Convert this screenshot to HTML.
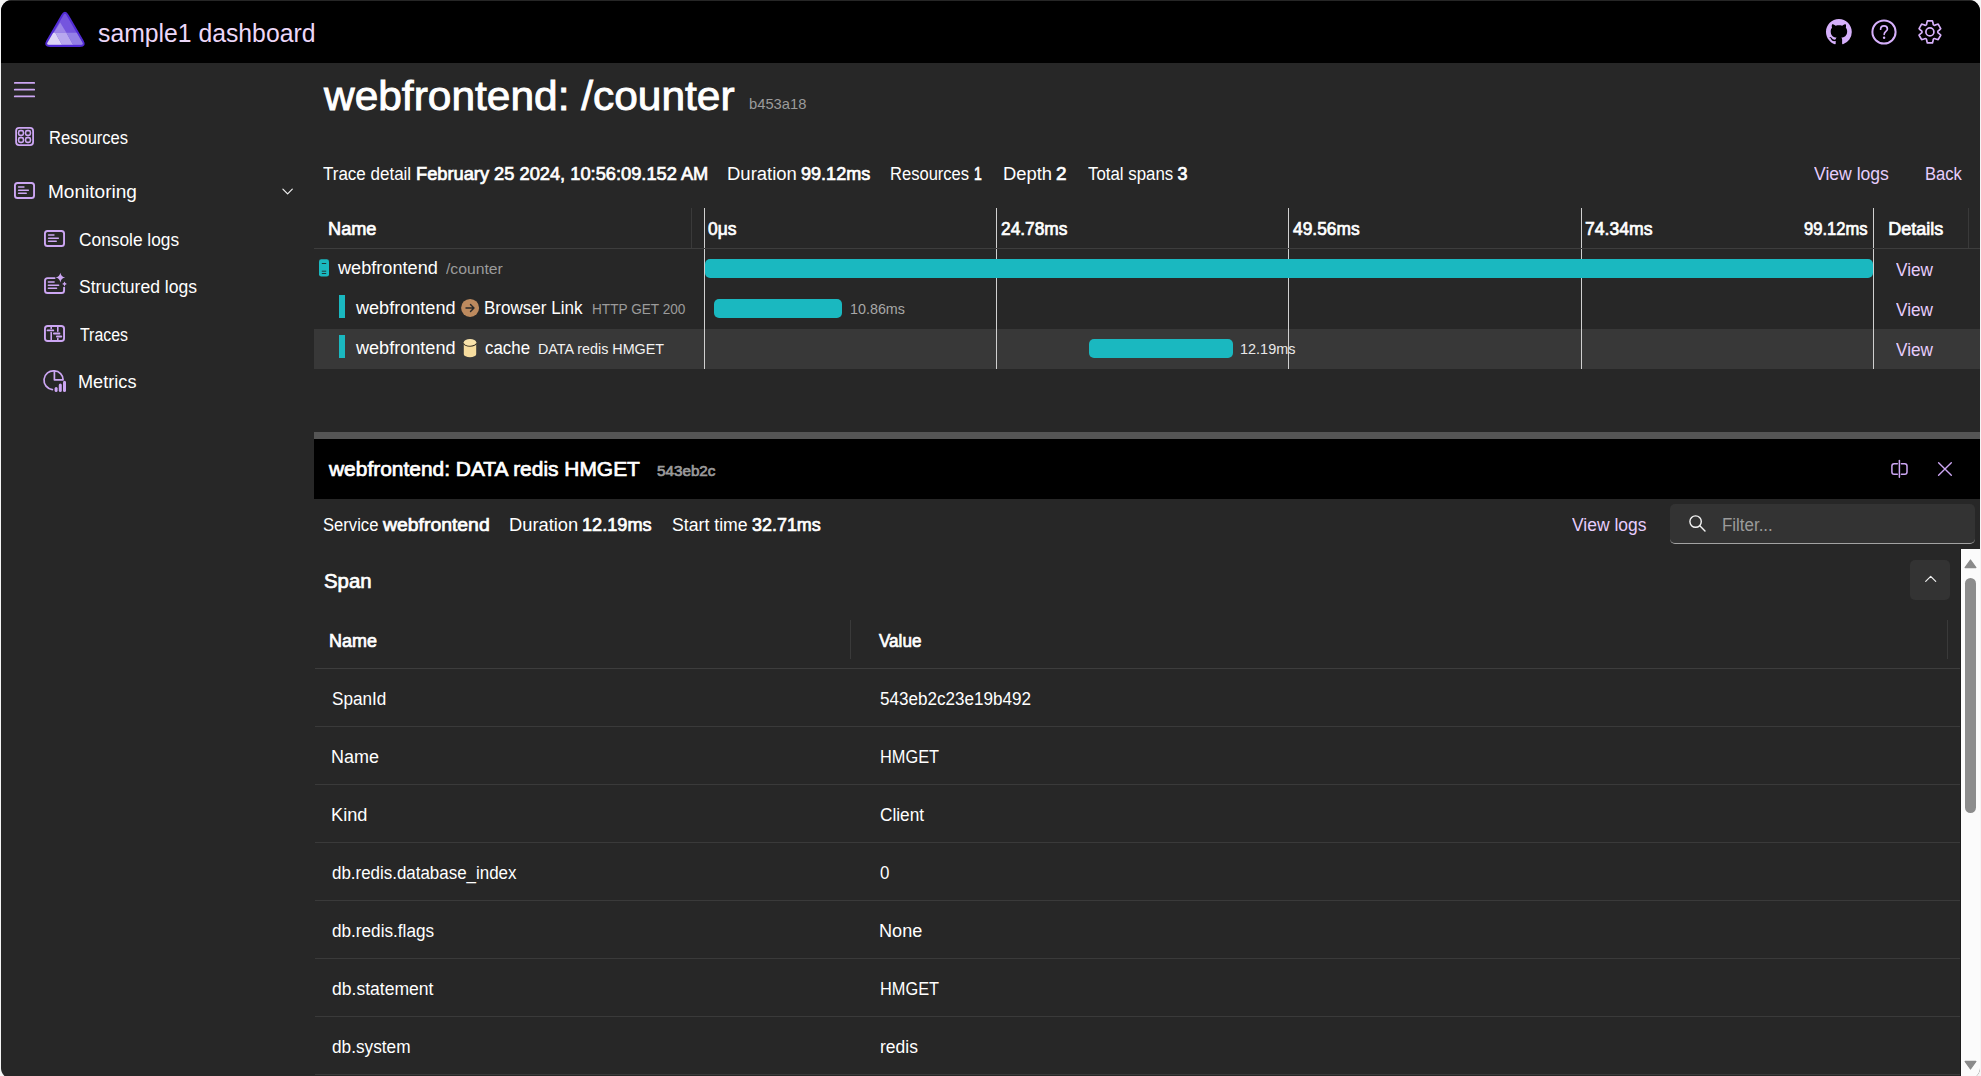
<!DOCTYPE html>
<html><head><meta charset="utf-8"><style>
html,body{margin:0;padding:0;background:#f5f5f5;width:1981px;height:1076px;overflow:hidden}
#win{position:absolute;left:1px;top:0;width:1979px;height:1079px;border-radius:11px;overflow:hidden;background:#272727}
#c{position:absolute;left:-1px;top:0;width:1981px;height:1076px}
.t{position:absolute;white-space:pre;line-height:1;font-family:"Liberation Sans",sans-serif}
svg{overflow:visible}
</style></head><body><div id="win"><div id="c">
<div style="position:absolute;left:0px;top:0px;width:1981px;height:1px;background:#262626"></div>
<div style="position:absolute;left:0px;top:1px;width:1981px;height:62px;background:#000"></div>
<svg style="position:absolute;left:40px;top:6px;" width="50" height="46" viewBox="40 6 50 46"><defs><clipPath id="lc"><path d="M66.25 14.85 Q64.95 12.60 63.65 14.85 L47.60 42.55 Q46.30 44.80 48.90 44.80 L81.00 44.80 Q83.60 44.80 82.30 42.55 Z"/></clipPath></defs>
<path d="M68.70 14.89 Q64.95 8.40 61.20 14.89 L46.35 40.61 Q42.60 47.10 50.10 47.10 L79.80 47.10 Q87.30 47.10 83.55 40.61 Z" fill="#512bd4"/>
<g clip-path="url(#lc)">
<rect x="40" y="6" width="50" height="46" fill="#7555de"/>
<path d="M60.2 22.6 L66.4 32.8 L53.7 32.8 Z" fill="#9d86e8"/>
<path d="M40 32.8 L55.3 32.8 L62.1 44.9 L40 44.9 Z" fill="#ddd4f6"/>
<path d="M55.3 32.8 L66.4 32.8 L73.2 44.9 L62.1 44.9 Z" fill="#b8a8ee"/>
<path d="M66.4 32.8 L90 32.8 L90 44.9 L73.2 44.9 Z" fill="#9480e6"/>
</g></svg>
<div class="t" style="left:98.27px;top:21px;font-size:25.5px;font-weight:400;color:#ecd7f8;transform:scaleX(0.9707);transform-origin:0 0;">sample1 dashboard</div>
<svg style="position:absolute;left:1826.4px;top:19px;" width="25.8" height="25.8" viewBox="0 0 16 16"><path fill="#d6b0fb" d="M8 0C3.58 0 0 3.58 0 8c0 3.54 2.29 6.53 5.47 7.59.4.07.55-.17.55-.38 0-.19-.01-.82-.01-1.49-2.01.37-2.53-.49-2.69-.94-.09-.23-.48-.94-.82-1.13-.28-.15-.68-.52-.01-.53.63-.01 1.08.58 1.23.82.72 1.21 1.87.87 2.33.66.07-.52.28-.87.51-1.07-1.78-.2-3.64-.89-3.64-3.95 0-.87.31-1.59.82-2.15-.08-.2-.36-1.02.08-2.12 0 0 .67-.21 2.2.82.64-.18 1.32-.27 2-.27.68 0 1.36.09 2 .27 1.53-1.04 2.2-.82 2.2-.82.44 1.1.16 1.92.08 2.12.51.56.82 1.27.82 2.15 0 3.07-1.87 3.75-3.65 3.95.29.25.54.73.54 1.48 0 1.07-.01 1.93-.01 2.2 0 .21.15.46.55.38A8.013 8.013 0 0016 8c0-4.42-3.58-8-8-8z"/></svg>
<svg style="position:absolute;left:1870px;top:18px;" width="28" height="28" viewBox="1870 18 28 28"><circle cx="1884" cy="32" r="11.6" fill="none" stroke="#d6b0fb" stroke-width="2"/>
<path d="M1880.6 29.2 C1880.6 27 1882.1 25.8 1884 25.8 C1885.9 25.8 1887.4 27 1887.4 28.9 C1887.4 31.4 1884.2 31.6 1884.2 34.3" fill="none" stroke="#d6b0fb" stroke-width="1.7" stroke-linecap="round"/>
<circle cx="1884.1" cy="37.8" r="1.2" fill="#d6b0fb"/></svg>
<svg style="position:absolute;left:1914px;top:16px;" width="32" height="32" viewBox="1914 16 32 32"><path d="M1927.36 20.89 L1932.44 20.89 L1933.08 23.16 C1933.03 25.19 1934.14 25.84 1935.88 24.78 L1938.16 24.19 L1940.71 28.60 L1939.06 30.29 C1937.27 31.26 1937.27 32.54 1939.06 33.51 L1940.71 35.20 L1938.16 39.61 L1935.88 39.02 C1934.14 37.96 1933.03 38.61 1933.08 40.64 L1932.44 42.91 L1927.36 42.91 L1926.72 40.64 C1926.77 38.61 1925.66 37.96 1923.92 39.02 L1921.64 39.61 L1919.09 35.20 L1920.74 33.51 C1922.53 32.54 1922.53 31.26 1920.74 30.29 L1919.09 28.60 L1921.64 24.19 L1923.92 24.78 C1925.66 25.84 1926.77 25.19 1926.72 23.16 Z" fill="none" stroke="#d6b0fb" stroke-width="1.7" stroke-linejoin="round"/>
<circle cx="1929.9" cy="31.9" r="4" fill="none" stroke="#d6b0fb" stroke-width="1.7"/></svg>
<svg style="position:absolute;left:10px;top:76px;" width="30" height="26" viewBox="10 76 30 26"><g stroke="#cca6f3" stroke-width="1.8" stroke-linecap="round">
<line x1="14.8" y1="82.9" x2="34.2" y2="82.9"/><line x1="14.8" y1="89.7" x2="34.2" y2="89.7"/><line x1="14.8" y1="96.4" x2="34.2" y2="96.4"/></g></svg>
<svg style="position:absolute;left:10px;top:120px;" width="30" height="30" viewBox="10 120 30 30"><g fill="none" stroke="#cca6f3" stroke-width="1.8">
<rect x="16.1" y="127.9" width="17" height="17.2" rx="3"/>
<rect x="18.6" y="130.6" width="4.8" height="4.8" rx="1.6" stroke-width="1.6"/><rect x="25.6" y="130.6" width="4.8" height="4.8" rx="1.6" stroke-width="1.6"/>
<rect x="18.6" y="137.6" width="4.8" height="4.8" rx="1.6" stroke-width="1.6"/><rect x="25.6" y="137.6" width="4.8" height="4.8" rx="1.6" stroke-width="1.6"/></g></svg>
<div class="t" style="left:48.62px;top:129px;font-size:18px;font-weight:400;color:#ffffff;transform:scaleX(0.9194);transform-origin:0 0;">Resources</div>
<svg style="position:absolute;left:10px;top:176px;" width="30" height="28" viewBox="10 176 30 28"><g fill="none" stroke="#cca6f3" stroke-width="1.9" stroke-linecap="round">
<rect x="14.95" y="182.95" width="19.1" height="15.1" rx="2.6"/>
<line x1="18.6" y1="187" x2="23.9" y2="187" stroke-width="1.6"/><line x1="18.6" y1="190.2" x2="28.3" y2="190.2" stroke-width="1.6"/><line x1="18.6" y1="193.3" x2="26.2" y2="193.3" stroke-width="1.6"/></g></svg>
<div class="t" style="left:48.41px;top:183px;font-size:18px;font-weight:400;color:#ffffff;transform:scaleX(1.0585);transform-origin:0 0;">Monitoring</div>
<svg style="position:absolute;left:278px;top:184px;" width="20" height="14" viewBox="278 184 20 14"><path d="M282.9 189.2 L287.6 193.9 L292.3 189.2" fill="none" stroke="#f0f0f0" stroke-width="1.2" stroke-linecap="round" stroke-linejoin="round"/></svg>
<svg style="position:absolute;left:40px;top:224px;" width="30" height="28" viewBox="10 176 30 28"><g fill="none" stroke="#cca6f3" stroke-width="1.9" stroke-linecap="round">
<rect x="14.95" y="182.95" width="19.1" height="15.1" rx="2.6"/>
<line x1="18.6" y1="187" x2="23.9" y2="187" stroke-width="1.6"/><line x1="18.6" y1="190.2" x2="28.3" y2="190.2" stroke-width="1.6"/><line x1="18.6" y1="193.3" x2="26.2" y2="193.3" stroke-width="1.6"/></g></svg>
<div class="t" style="left:79.04px;top:231px;font-size:18px;font-weight:400;color:#ffffff;transform:scaleX(0.9623);transform-origin:0 0;">Console logs</div>
<svg style="position:absolute;left:40px;top:266px;" width="30" height="30" viewBox="40 266 30 30"><g fill="none" stroke="#cca6f3" stroke-width="1.9" stroke-linecap="round">
<path d="M54.6 278.1 L47.6 278.1 Q45 278.1 45 280.7 L45 290.4 Q45 293 47.6 293 L61.5 293 Q64.1 293 64.1 290.4 L64.1 287.6"/>
<line x1="48.4" y1="282" x2="54.1" y2="282" stroke-width="1.6"/><line x1="48.4" y1="285.2" x2="58.6" y2="285.2" stroke-width="1.6"/><line x1="48.4" y1="288.3" x2="56.5" y2="288.3" stroke-width="1.6"/></g>
<path d="M60.35 272.8 Q61.1 276.9 65.2 277.6 Q61.1 278.3 60.35 282.4 Q59.6 278.3 55.5 277.6 Q59.6 276.9 60.35 272.8 Z" fill="#cca6f3"/>
<path d="M64.5 281.6 Q64.9 283.6 66.9 284 Q64.9 284.4 64.5 286.4 Q64.1 284.4 62.1 284 Q64.1 283.6 64.5 281.6 Z" fill="#cca6f3"/></svg>
<div class="t" style="left:79.27px;top:278px;font-size:18px;font-weight:400;color:#ffffff;transform:scaleX(0.9749);transform-origin:0 0;">Structured logs</div>
<svg style="position:absolute;left:40px;top:318px;" width="30" height="30" viewBox="40 318 30 30"><g fill="none" stroke="#cca6f3" stroke-width="1.9" stroke-linecap="round">
<rect x="44.95" y="325.95" width="19.1" height="15.1" rx="2.8"/>
<line x1="47.5" y1="330.4" x2="53.3" y2="330.4" stroke-width="1.8"/><line x1="53.9" y1="333.5" x2="59.5" y2="333.5" stroke-width="1.8"/><line x1="56.9" y1="336.5" x2="61.3" y2="336.5" stroke-width="1.8"/>
<line x1="51.2" y1="326" x2="51.2" y2="328.4" stroke-width="1.6"/><line x1="51.2" y1="332.5" x2="51.2" y2="341" stroke-width="1.6"/>
<line x1="57.8" y1="326" x2="57.8" y2="331.3" stroke-width="1.6"/><line x1="57.8" y1="338.6" x2="57.8" y2="341" stroke-width="1.6"/></g></svg>
<div class="t" style="left:79.56px;top:326px;font-size:18px;font-weight:400;color:#ffffff;transform:scaleX(0.8830);transform-origin:0 0;">Traces</div>
<svg style="position:absolute;left:40px;top:364px;" width="30" height="30" viewBox="40 364 30 30"><g fill="none" stroke="#cca6f3" stroke-width="1.7" stroke-linecap="round" stroke-linejoin="round">
<path d="M52.4 389.6 A9.2 9.2 0 0 1 54.4 370.9"/>
<path d="M54.4 370.9 L54.4 379.8 L63.1 379.8 A8.8 8.8 0 0 0 54.4 370.9 Z"/></g>
<g stroke="#cca6f3" stroke-width="3" stroke-linecap="round">
<line x1="56.1" y1="388.5" x2="56.1" y2="390.4"/><line x1="60.3" y1="385.1" x2="60.3" y2="390.4"/><line x1="64.5" y1="382.3" x2="64.5" y2="390.4"/></g></svg>
<div class="t" style="left:78.49px;top:373px;font-size:18px;font-weight:400;color:#ffffff;transform:scaleX(1.0081);transform-origin:0 0;">Metrics</div>
<div class="t" style="left:324.07px;top:76px;font-size:41px;font-weight:400;color:#ffffff;transform:scaleX(1.0353);transform-origin:0 0;-webkit-text-stroke:0.9px #ffffff;">webfrontend: /counter</div>
<div class="t" style="left:748.52px;top:96px;font-size:15px;font-weight:400;color:#9b9b9b;transform:scaleX(0.9815);transform-origin:0 0;">b453a18</div>
<div class="t" style="left:323.13px;top:165px;font-size:18px;font-weight:400;color:#ffffff;transform:scaleX(0.9439);transform-origin:0 0;">Trace detail</div>
<div class="t" style="left:415.83px;top:165px;font-size:18px;font-weight:400;color:#ffffff;transform:scaleX(1.0142);transform-origin:0 0;-webkit-text-stroke:0.7px #ffffff;">February 25 2024, 10:56:09.152 AM</div>
<div class="t" style="left:727.46px;top:165px;font-size:18px;font-weight:400;color:#ffffff;transform:scaleX(1.0268);transform-origin:0 0;">Duration</div>
<div class="t" style="left:801.10px;top:165px;font-size:18px;font-weight:400;color:#ffffff;-webkit-text-stroke:0.7px #ffffff;">99.12ms</div>
<div class="t" style="left:889.62px;top:165px;font-size:18px;font-weight:400;color:#ffffff;transform:scaleX(0.9194);transform-origin:0 0;">Resources</div>
<div class="t" style="left:973.90px;top:165px;font-size:18px;font-weight:400;color:#ffffff;transform:scaleX(0.7816);transform-origin:0 0;-webkit-text-stroke:0.7px #ffffff;">1</div>
<div class="t" style="left:1003.07px;top:165px;font-size:18px;font-weight:400;color:#ffffff;transform:scaleX(1.0210);transform-origin:0 0;">Depth</div>
<div class="t" style="left:1055.92px;top:165px;font-size:18px;font-weight:400;color:#ffffff;transform:scaleX(1.0503);transform-origin:0 0;-webkit-text-stroke:0.7px #ffffff;">2</div>
<div class="t" style="left:1087.53px;top:165px;font-size:18px;font-weight:400;color:#ffffff;transform:scaleX(0.9359);transform-origin:0 0;">Total spans</div>
<div class="t" style="left:1177.40px;top:165px;font-size:18px;font-weight:400;color:#ffffff;-webkit-text-stroke:0.7px #ffffff;">3</div>
<div class="t" style="left:1813.70px;top:165px;font-size:18px;font-weight:400;color:#e6cdfd;transform:scaleX(0.9763);transform-origin:0 0;">View logs</div>
<div class="t" style="left:1925.12px;top:165px;font-size:18px;font-weight:400;color:#e6cdfd;transform:scaleX(0.9195);transform-origin:0 0;">Back</div>
<div style="position:absolute;left:314px;top:329px;width:1666px;height:40px;background:#383838"></div>
<div style="position:absolute;left:314px;top:248px;width:1666px;height:1px;background:#3d3d3d"></div>
<div style="position:absolute;left:691px;top:208px;width:1px;height:40px;background:#3a3a3a"></div>
<div style="position:absolute;left:1968px;top:208px;width:1px;height:40px;background:#3a3a3a"></div>
<div style="position:absolute;left:704px;top:208px;width:1px;height:40px;background:#d0d0d0"></div>
<div style="position:absolute;left:704px;top:249px;width:1px;height:120px;background:#d0d0d0"></div>
<div style="position:absolute;left:996px;top:208px;width:1px;height:40px;background:#d0d0d0"></div>
<div style="position:absolute;left:996px;top:249px;width:1px;height:120px;background:#d0d0d0"></div>
<div style="position:absolute;left:1288px;top:208px;width:1px;height:40px;background:#d0d0d0"></div>
<div style="position:absolute;left:1288px;top:249px;width:1px;height:120px;background:#d0d0d0"></div>
<div style="position:absolute;left:1581px;top:208px;width:1px;height:40px;background:#d0d0d0"></div>
<div style="position:absolute;left:1581px;top:249px;width:1px;height:120px;background:#d0d0d0"></div>
<div style="position:absolute;left:1873px;top:208px;width:1px;height:40px;background:#d0d0d0"></div>
<div style="position:absolute;left:1873px;top:249px;width:1px;height:120px;background:#d0d0d0"></div>
<div class="t" style="left:328.04px;top:220px;font-size:18px;font-weight:400;color:#ffffff;transform:scaleX(1.0097);transform-origin:0 0;-webkit-text-stroke:0.7px #ffffff;">Name</div>
<div class="t" style="left:708.41px;top:220px;font-size:18px;font-weight:400;color:#ffffff;transform:scaleX(0.9686);transform-origin:0 0;-webkit-text-stroke:0.7px #ffffff;">0μs</div>
<div class="t" style="left:1000.77px;top:220px;font-size:18px;font-weight:400;color:#ffffff;transform:scaleX(0.9625);transform-origin:0 0;-webkit-text-stroke:0.7px #ffffff;">24.78ms</div>
<div class="t" style="left:1292.86px;top:220px;font-size:18px;font-weight:400;color:#ffffff;transform:scaleX(0.9642);transform-origin:0 0;-webkit-text-stroke:0.7px #ffffff;">49.56ms</div>
<div class="t" style="left:1584.86px;top:220px;font-size:18px;font-weight:400;color:#ffffff;transform:scaleX(0.9787);transform-origin:0 0;-webkit-text-stroke:0.7px #ffffff;">74.34ms</div>
<div class="t" style="left:1804.03px;top:220px;font-size:18px;font-weight:400;color:#ffffff;transform:scaleX(0.9208);transform-origin:0 0;-webkit-text-stroke:0.7px #ffffff;">99.12ms</div>
<div class="t" style="left:1888.15px;top:220px;font-size:18px;font-weight:400;color:#ffffff;-webkit-text-stroke:0.7px #ffffff;">Details</div>
<div style="position:absolute;left:704.5px;top:259px;width:1168.5px;height:19px;background:#1ab8c0;border-radius:5px"></div>
<div style="position:absolute;left:714px;top:299px;width:128px;height:19px;background:#1ab8c0;border-radius:5px"></div>
<div style="position:absolute;left:1089px;top:339px;width:144px;height:19px;background:#1ab8c0;border-radius:5px"></div>
<svg style="position:absolute;left:317px;top:257px;" width="14" height="22" viewBox="317 257 14 22"><rect x="319" y="259.2" width="10" height="17.4" rx="2.3" fill="#1ab8c0"/>
<line x1="321.8" y1="263.5" x2="326.2" y2="263.5" stroke="#1e3a3c" stroke-width="1"/><line x1="321.8" y1="271.2" x2="326.2" y2="271.2" stroke="#1e3a3c" stroke-width="1"/><line x1="321.8" y1="273.5" x2="326.2" y2="273.5" stroke="#1e3a3c" stroke-width="1"/></svg>
<div class="t" style="left:337.50px;top:259px;font-size:18px;font-weight:400;color:#ffffff;transform:scaleX(1.0077);transform-origin:0 0;">webfrontend</div>
<div class="t" style="left:446.00px;top:261px;font-size:15.5px;font-weight:400;color:#9b9b9b;transform:scaleX(1.0152);transform-origin:0 0;">/counter</div>
<div class="t" style="left:1896.00px;top:261px;font-size:18px;font-weight:400;color:#e6cdfd;transform:scaleX(0.9548);transform-origin:0 0;">View</div>
<div style="position:absolute;left:339px;top:295px;width:6px;height:23px;background:#1ab8c0"></div>
<div class="t" style="left:356.00px;top:299px;font-size:18px;font-weight:400;color:#ffffff;transform:scaleX(1.0046);transform-origin:0 0;">webfrontend</div>
<svg style="position:absolute;left:458px;top:297px;" width="23" height="23" viewBox="458 297 23 23"><circle cx="470.1" cy="307.9" r="9" fill="#bd8a5e"/><path d="M466 308 L474 308 M470.5 304.4 L474 308 L470.5 311.6" fill="none" stroke="#2a2a2a" stroke-width="1.4" stroke-linecap="round" stroke-linejoin="round"/></svg>
<div class="t" style="left:483.98px;top:299px;font-size:18px;font-weight:400;color:#ffffff;transform:scaleX(0.9473);transform-origin:0 0;">Browser Link</div>
<div class="t" style="left:591.90px;top:301px;font-size:15.5px;font-weight:400;color:#9b9b9b;transform:scaleX(0.8794);transform-origin:0 0;">HTTP GET 200</div>
<div class="t" style="left:849.74px;top:301px;font-size:15px;font-weight:400;color:#a8a8a8;transform:scaleX(0.9554);transform-origin:0 0;">10.86ms</div>
<div class="t" style="left:1896.00px;top:301px;font-size:18px;font-weight:400;color:#e6cdfd;transform:scaleX(0.9548);transform-origin:0 0;">View</div>
<div style="position:absolute;left:339px;top:335px;width:6px;height:23px;background:#1ab8c0"></div>
<div class="t" style="left:356.00px;top:339px;font-size:18px;font-weight:400;color:#ffffff;transform:scaleX(1.0046);transform-origin:0 0;">webfrontend</div>
<svg style="position:absolute;left:460px;top:337px;" width="20" height="22" viewBox="460 337 20 22"><path d="M463.8 342.3 L463.8 354.2 A6.2 3 0 0 0 476.2 354.2 L476.2 342.3 Z" fill="#f6dc9e"/><path d="M463.8 343.2 A6.2 3 0 0 0 476.2 343.2" fill="none" stroke="#3a3328" stroke-width="1.1"/><ellipse cx="470" cy="342.2" rx="6.2" ry="3.1" fill="#f8e2aa"/></svg>
<div class="t" style="left:484.70px;top:339px;font-size:18px;font-weight:400;color:#ffffff;transform:scaleX(0.9376);transform-origin:0 0;">cache</div>
<div class="t" style="left:538.04px;top:341px;font-size:15.5px;font-weight:400;color:#f2f2f2;transform:scaleX(0.9244);transform-origin:0 0;">DATA redis HMGET</div>
<div class="t" style="left:1240.04px;top:341px;font-size:15px;font-weight:400;color:#e8e8e8;transform:scaleX(0.9643);transform-origin:0 0;">12.19ms</div>
<div class="t" style="left:1896.00px;top:341px;font-size:18px;font-weight:400;color:#e6cdfd;transform:scaleX(0.9548);transform-origin:0 0;">View</div>
<div style="position:absolute;left:314px;top:432px;width:1666px;height:7px;background:#555555"></div>
<div style="position:absolute;left:314px;top:439px;width:1666px;height:60px;background:#000"></div>
<div class="t" style="left:329.17px;top:459px;font-size:20px;font-weight:400;color:#ffffff;transform:scaleX(1.0462);transform-origin:0 0;-webkit-text-stroke:0.7px #ffffff;">webfrontend: DATA redis HMGET</div>
<div class="t" style="left:656.85px;top:463px;font-size:15px;font-weight:400;color:#9b9b9b;transform:scaleX(1.0157);transform-origin:0 0;-webkit-text-stroke:0.7px #9b9b9b;">543eb2c</div>
<svg style="position:absolute;left:1886px;top:456px;" width="26" height="26" viewBox="1886 456 26 26"><g fill="none" stroke="#cca6f3" stroke-width="1.5" stroke-linecap="round" stroke-linejoin="round">
<path d="M1897.3 463.8 L1894.2 463.8 Q1891.9 463.8 1891.9 466.1 L1891.9 471.9 Q1891.9 474.2 1894.2 474.2 L1897.3 474.2"/>
<path d="M1901.4 463.8 L1904.7 463.8 Q1907 463.8 1907 466.1 L1907 471.9 Q1907 474.2 1904.7 474.2 L1901.4 474.2"/>
<line x1="1899.4" y1="460.6" x2="1899.4" y2="477.3"/></g></svg>
<svg style="position:absolute;left:1932px;top:456px;" width="26" height="26" viewBox="1932 456 26 26"><path d="M1938.6 462.8 L1951.3 475.2 M1951.3 462.8 L1938.6 475.2" stroke="#cca6f3" stroke-width="1.4" stroke-linecap="round"/></svg>
<div class="t" style="left:323.21px;top:516px;font-size:18px;font-weight:400;color:#ffffff;transform:scaleX(0.9231);transform-origin:0 0;">Service</div>
<div class="t" style="left:383.38px;top:516px;font-size:18px;font-weight:400;color:#ffffff;transform:scaleX(1.0767);transform-origin:0 0;-webkit-text-stroke:0.7px #ffffff;">webfrontend</div>
<div class="t" style="left:509.47px;top:516px;font-size:18px;font-weight:400;color:#ffffff;transform:scaleX(1.0176);transform-origin:0 0;">Duration</div>
<div class="t" style="left:582.49px;top:516px;font-size:18px;font-weight:400;color:#ffffff;transform:scaleX(1.0074);transform-origin:0 0;-webkit-text-stroke:0.7px #ffffff;">12.19ms</div>
<div class="t" style="left:671.96px;top:516px;font-size:18px;font-weight:400;color:#ffffff;transform:scaleX(0.9828);transform-origin:0 0;">Start time</div>
<div class="t" style="left:752.40px;top:516px;font-size:18px;font-weight:400;color:#ffffff;transform:scaleX(0.9956);transform-origin:0 0;-webkit-text-stroke:0.7px #ffffff;">32.71ms</div>
<div class="t" style="left:1571.50px;top:516px;font-size:18px;font-weight:400;color:#e6cdfd;transform:scaleX(0.9711);transform-origin:0 0;">View logs</div>
<div style="position:absolute;left:1670px;top:504px;width:305px;height:38.5px;background:#333333;border-radius:5px;border-bottom:1.5px solid #a3a3a3"></div>
<svg style="position:absolute;left:1684px;top:510px;" width="26" height="26" viewBox="1684 510 26 26"><circle cx="1695.6" cy="521.6" r="5.7" fill="none" stroke="#f5f5f5" stroke-width="1.4"/>
<line x1="1699.8" y1="525.8" x2="1705" y2="531" stroke="#f5f5f5" stroke-width="1.4" stroke-linecap="round"/></svg>
<div class="t" style="left:1721.99px;top:516px;font-size:18px;font-weight:400;color:#9b9b9b;transform:scaleX(0.9392);transform-origin:0 0;">Filter...</div>
<div class="t" style="left:324.04px;top:571px;font-size:20px;font-weight:400;color:#ffffff;transform:scaleX(1.0189);transform-origin:0 0;-webkit-text-stroke:0.7px #ffffff;">Span</div>
<div style="position:absolute;left:1910px;top:560px;width:40px;height:40px;background:#333333;border-radius:5px"></div>
<svg style="position:absolute;left:1920px;top:570px;" width="20" height="20" viewBox="1920 570 20 20"><path d="M1925.7 581.3 L1930.7 576.3 L1935.7 581.3" fill="none" stroke="#f0f0f0" stroke-width="1.2" stroke-linecap="round" stroke-linejoin="round"/></svg>
<div class="t" style="left:328.55px;top:632px;font-size:18px;font-weight:400;color:#ffffff;transform:scaleX(0.9968);transform-origin:0 0;-webkit-text-stroke:0.7px #ffffff;">Name</div>
<div class="t" style="left:878.63px;top:632px;font-size:18px;font-weight:400;color:#ffffff;transform:scaleX(0.9485);transform-origin:0 0;-webkit-text-stroke:0.7px #ffffff;">Value</div>
<div style="position:absolute;left:850px;top:620px;width:1px;height:39px;background:#3a3a3a"></div>
<div style="position:absolute;left:1947px;top:620px;width:1px;height:39px;background:#3a3a3a"></div>
<div style="position:absolute;left:315px;top:668px;width:1645px;height:1px;background:#3d3d3d"></div>
<div class="t" style="left:331.69px;top:690px;font-size:18px;font-weight:400;color:#ffffff;transform:scaleX(0.9509);transform-origin:0 0;">SpanId</div>
<div class="t" style="left:880.29px;top:690px;font-size:18px;font-weight:400;color:#ffffff;transform:scaleX(0.9490);transform-origin:0 0;">543eb2c23e19b492</div>
<div style="position:absolute;left:315px;top:726px;width:1645px;height:1px;background:#3a3a3a"></div>
<div class="t" style="left:330.90px;top:748px;font-size:18px;font-weight:400;color:#ffffff;transform:scaleX(0.9967);transform-origin:0 0;">Name</div>
<div class="t" style="left:879.64px;top:748px;font-size:18px;font-weight:400;color:#ffffff;transform:scaleX(0.9079);transform-origin:0 0;">HMGET</div>
<div style="position:absolute;left:315px;top:784px;width:1645px;height:1px;background:#3a3a3a"></div>
<div class="t" style="left:330.88px;top:806px;font-size:18px;font-weight:400;color:#ffffff;transform:scaleX(1.0105);transform-origin:0 0;">Kind</div>
<div class="t" style="left:880.04px;top:806px;font-size:18px;font-weight:400;color:#ffffff;transform:scaleX(0.9556);transform-origin:0 0;">Client</div>
<div style="position:absolute;left:315px;top:842px;width:1645px;height:1px;background:#3a3a3a"></div>
<div class="t" style="left:331.69px;top:864px;font-size:18px;font-weight:400;color:#ffffff;transform:scaleX(0.9403);transform-origin:0 0;">db.redis.database_index</div>
<div class="t" style="left:880.29px;top:864px;font-size:18px;font-weight:400;color:#ffffff;transform:scaleX(0.9412);transform-origin:0 0;">0</div>
<div style="position:absolute;left:315px;top:900px;width:1645px;height:1px;background:#3a3a3a"></div>
<div class="t" style="left:331.68px;top:922px;font-size:18px;font-weight:400;color:#ffffff;transform:scaleX(0.9536);transform-origin:0 0;">db.redis.flags</div>
<div class="t" style="left:879.49px;top:922px;font-size:18px;font-weight:400;color:#ffffff;transform:scaleX(1.0061);transform-origin:0 0;">None</div>
<div style="position:absolute;left:315px;top:958px;width:1645px;height:1px;background:#3a3a3a"></div>
<div class="t" style="left:331.67px;top:980px;font-size:18px;font-weight:400;color:#ffffff;transform:scaleX(0.9743);transform-origin:0 0;">db.statement</div>
<div class="t" style="left:879.64px;top:980px;font-size:18px;font-weight:400;color:#ffffff;transform:scaleX(0.9079);transform-origin:0 0;">HMGET</div>
<div style="position:absolute;left:315px;top:1016px;width:1645px;height:1px;background:#3a3a3a"></div>
<div class="t" style="left:331.68px;top:1038px;font-size:18px;font-weight:400;color:#ffffff;transform:scaleX(0.9575);transform-origin:0 0;">db.system</div>
<div class="t" style="left:879.78px;top:1038px;font-size:18px;font-weight:400;color:#ffffff;transform:scaleX(0.9730);transform-origin:0 0;">redis</div>
<div style="position:absolute;left:315px;top:1074px;width:1645px;height:1px;background:#3a3a3a"></div>
<div style="position:absolute;left:1960px;top:549px;width:1px;height:527px;background:#1c1c1c"></div>
<div style="position:absolute;left:1961px;top:549px;width:19px;height:527px;background:#fbfbfb"></div>
<svg style="position:absolute;left:1961px;top:555px;" width="19" height="16" viewBox="1961 555 19 16"><path d="M1970.5 560 L1975.9 567.6 L1965.1 567.6 Z" fill="#8a8a8a" stroke="#8a8a8a" stroke-width="1.2" stroke-linejoin="round"/></svg>
<div style="position:absolute;left:1965px;top:578px;width:11px;height:235px;background:#8c8c8c;border-radius:5.5px"></div>
<svg style="position:absolute;left:1961px;top:1056px;" width="19" height="16" viewBox="1961 1056 19 16"><path d="M1965.1 1061.4 L1975.9 1061.4 L1970.5 1069 Z" fill="#8a8a8a" stroke="#8a8a8a" stroke-width="1.2" stroke-linejoin="round"/></svg>
</div></div></body></html>
